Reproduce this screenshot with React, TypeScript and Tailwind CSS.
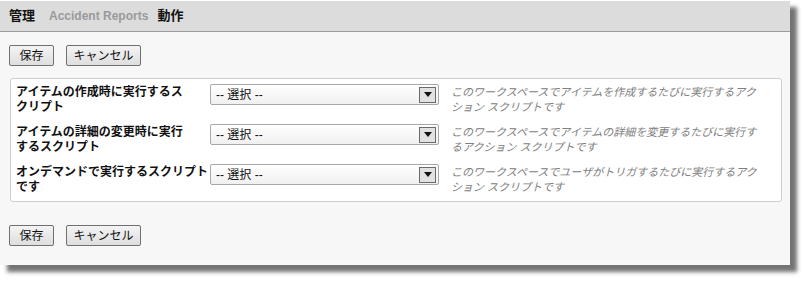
import React from 'react';

const rows = [
  {
    label: ['アイテムの作成時に実行するス', 'クリプト'],
    desc: 'このワークスペースでアイテムを作成するたびに実行するアクション スクリプトです',
  },
  {
    label: ['アイテムの詳細の変更時に実行', 'するスクリプト'],
    desc: 'このワークスペースでアイテムの詳細を変更するたびに実行するアクション スクリプトです',
  },
  {
    label: ['オンデマンドで実行するスクリプト', 'です'],
    desc: 'このワークスペースでユーザがトリガするたびに実行するアクション スクリプトです',
  },
];

const font = "font-['Liberation_Sans','Noto_Sans_CJK_JP',sans-serif]";

const Btn = ({ children, w }: { children: React.ReactNode; w: string }) => (
  <button
    className={`${w} h-[21px] border border-[#707070] rounded-[2px] bg-gradient-to-b from-[#f4f4f4] to-[#dedede] text-[12px] leading-none text-[#111] flex items-center justify-center`}
  >
    {children}
  </button>
);

const FakeSelect = () => (
  <div className="w-[229px] h-[21px] border border-[#a8a8a8] rounded-[2px] bg-gradient-to-b from-white to-[#f0f0f0] flex items-center justify-between pl-[5px] pr-[2px]">
    <span className="text-[12px] text-[#111] leading-none">-- 選択 --</span>
    <span className="w-[17px] h-[16px] border border-[#6a6a6a] bg-[#e2e2e2] flex items-center justify-center">
      <svg width="8" height="5" viewBox="0 0 8 5">
        <path d="M0 0H8L4 5Z" fill="#111" />
      </svg>
    </span>
  </div>
);

export default function App() {
  return (
    <div className={`${font} bg-white w-[805px] h-[281px]`}>
      <div className="w-[790px] h-[265px] bg-[#f7f7f7] shadow-[7px_7px_4px_rgba(0,0,0,0.55)] flex flex-col">
        {/* header */}
        <div className="h-[32px] bg-[#dcdcdc] border-b border-[#9a9a9a] border-t border-t-white flex items-center pl-[9px] font-bold">
          <span className="text-[13px] text-[#111]">管理</span>
          <span className="text-[12px] text-[#9a9a9a] ml-[14px]">Accident Reports</span>
          <span className="text-[13px] text-[#111] ml-[9px]">動作</span>
        </div>

        <div className="flex gap-[12px] pl-[9px] mt-[13px]">
          <Btn w="w-[45px]">保存</Btn>
          <Btn w="w-[75px]">キャンセル</Btn>
        </div>

        <div className="ml-[10px] mt-[12px] w-[772px] h-[124px] bg-white border border-[#cccccc] rounded-[3px] pt-[5px] pl-[5px] flex flex-col gap-[10px]">
          {rows.map((r, i) => (
            <div key={i} className="flex h-[30px]">
              <div className="w-[194px] text-[12px] font-bold leading-[15px] text-[#111] pt-[1px]">
                {r.label[0]}
                <br />
                {r.label[1]}
              </div>
              <FakeSelect />
              <div className="w-[312px] ml-[12px] text-[11px] italic leading-[15px] text-[#808080] pt-[1px]">
                {r.desc}
              </div>
            </div>
          ))}
        </div>

        <div className="flex gap-[12px] pl-[9px] mt-[23px]">
          <Btn w="w-[45px]">保存</Btn>
          <Btn w="w-[75px]">キャンセル</Btn>
        </div>
      </div>
    </div>
  );
}
